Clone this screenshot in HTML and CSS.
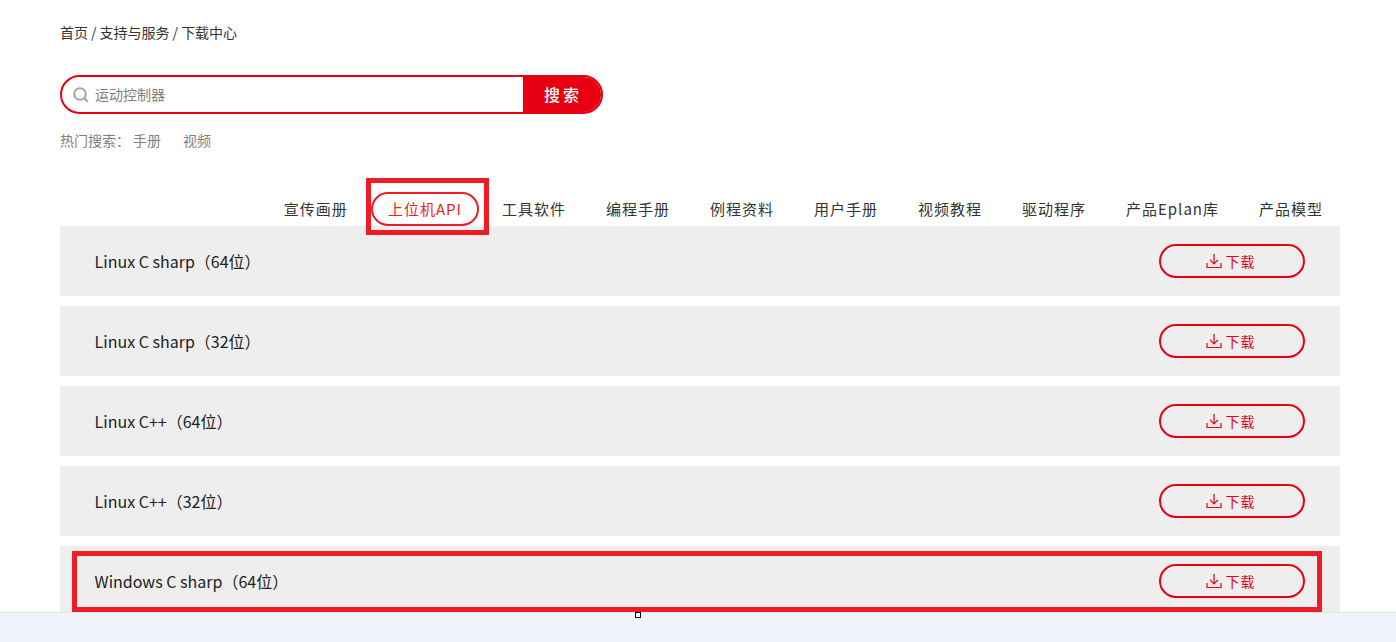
FILE: index.html
```html
<!DOCTYPE html>
<html lang="zh-CN">
<head>
  <meta charset="UTF-8" />
  <title>下载中心</title>
  <link rel="stylesheet" href="styles.css">
</head>
<body>

  <div class="page">
    <div class="crumbs">首页 / 支持与服务 / 下载中心</div>

    <form class="search">
      <svg class="search-icon" width="16" height="16" viewBox="0 0 16 16">
        <circle cx="7" cy="7" r="5.8" />
        <path d="M11.2 11.2 L14.8 14.8" />
      </svg>
      <input type="text" placeholder="运动控制器" />
      <button type="button">搜索</button>
    </form>

    <div class="hot">
      <span>热门搜索：</span>
      <a href="#">手册</a>
      <a href="#">视频</a>
    </div>

    <ul class="tabs">
      <li>宣传画册</li>
      <li class="active">上位机API</li>
      <li>工具软件</li>
      <li>编程手册</li>
      <li>例程资料</li>
      <li>用户手册</li>
      <li>视频教程</li>
      <li>驱动程序</li>
      <li>产品Eplan库</li>
      <li>产品模型</li>
    </ul>

    <div class="files">
      <div class="file">
        <span>Linux C sharp（64位）</span>
        <a class="down" href="#">
          <svg width="16" height="16" viewBox="0 0 16 16"><path d="M8 1 V10.5 M4 6.8 L8 10.8 L12 6.8 M1 10 V14.5 H15 V10" /></svg>
          <span>下载</span>
        </a>
      </div>
      <div class="file">
        <span>Linux C sharp（32位）</span>
        <a class="down" href="#">
          <svg width="16" height="16" viewBox="0 0 16 16"><path d="M8 1 V10.5 M4 6.8 L8 10.8 L12 6.8 M1 10 V14.5 H15 V10" /></svg>
          <span>下载</span>
        </a>
      </div>
      <div class="file">
        <span>Linux C++（64位）</span>
        <a class="down" href="#">
          <svg width="16" height="16" viewBox="0 0 16 16"><path d="M8 1 V10.5 M4 6.8 L8 10.8 L12 6.8 M1 10 V14.5 H15 V10" /></svg>
          <span>下载</span>
        </a>
      </div>
      <div class="file">
        <span>Linux C++（32位）</span>
        <a class="down" href="#">
          <svg width="16" height="16" viewBox="0 0 16 16"><path d="M8 1 V10.5 M4 6.8 L8 10.8 L12 6.8 M1 10 V14.5 H15 V10" /></svg>
          <span>下载</span>
        </a>
      </div>
      <div class="file">
        <span>Windows C sharp（64位）</span>
        <a class="down" href="#">
          <svg width="16" height="16" viewBox="0 0 16 16"><path d="M8 1 V10.5 M4 6.8 L8 10.8 L12 6.8 M1 10 V14.5 H15 V10" /></svg>
          <span>下载</span>
        </a>
      </div>
    </div>
  </div>

  <!-- red marks drawn over the screenshot -->
  <div class="mark mark-tab"></div>
  <div class="mark mark-row"></div>

  <div class="bottom-bar"><i class="handle"></i></div>

</body>
</html>
```

FILE: styles.css
```css
html, body {
  margin: 0;
  padding: 0;
  height: 642px;
  overflow: hidden;
  background-color: #fff;
  font-family: "Noto Sans CJK SC", "Noto Sans", sans-serif;
  color: #333;
}

a {
  text-decoration: none;
  color: inherit;
}

.page {
  padding: 0 56px 0 60px;
}

.crumbs {
  padding-top: 22px;
  font-size: 14px;
  line-height: 20px;
  letter-spacing: -0.03px;
  color: #333;
}

.search {
  display: flex;
  align-items: center;
  box-sizing: border-box;
  width: 543px;
  height: 39px;
  margin-top: 33px;
  padding-left: 11px;
  border: 2px solid #e60012;
  border-radius: 20px;
  overflow: hidden;
}

.search-icon {
  flex: none;
  fill: none;
  stroke: #a6a6a6;
  stroke-width: 2;
}

.search input {
  flex: 1;
  min-width: 0;
  margin-left: 6px;
  padding: 0 0 2px;
  border: none;
  outline: none;
  font-family: inherit;
  font-size: 14px;
  color: #808080;
}

.search input::placeholder {
  color: #808080;
  opacity: 1;
}

.search button {
  flex: none;
  align-self: stretch;
  width: 78px;
  padding: 0 0 2px 2px;
  border: none;
  background-color: #e60012;
  color: #fff;
  font-family: inherit;
  font-size: 16px;
  font-weight: 500;
  letter-spacing: 3px;
}

.hot {
  display: flex;
  margin-top: 15px;
  font-size: 14px;
  line-height: 22px;
  color: #808080;
}

.hot span {
  margin-right: 3px;
}

.hot a {
  margin-right: 22px;
  color: #808080;
}

.tabs {
  display: flex;
  justify-content: flex-end;
  gap: 6px;
  list-style: none;
  width: 1280px;
  margin: 41px 0 0;
  padding: 0;
}

.tabs li {
  box-sizing: border-box;
  height: 34px;
  padding: 0 15px;
  border: 2px solid transparent;
  border-radius: 17px;
  font-size: 15px;
  line-height: 30px;
  letter-spacing: 1px;
  color: #333;
  white-space: nowrap;
}

.tabs li.active {
  border-color: #ee1c25;
  color: #ee1c25;
}

.files {
  width: 1280px;
}

.file {
  display: flex;
  justify-content: space-between;
  align-items: center;
  height: 70px;
  margin-bottom: 10px;
  padding: 0 35px 0 34.6px;
  box-sizing: border-box;
  background-color: #eee;
  font-size: 16px;
  color: #222;
}

.down {
  display: flex;
  justify-content: center;
  align-items: center;
  gap: 4px;
  box-sizing: border-box;
  width: 146px;
  height: 34px;
  padding-right: 3px;
  border: 2px solid #e60012;
  border-radius: 17px;
  font-size: 14px;
  letter-spacing: 1px;
  color: #e60012;
}

.down span {
  padding-bottom: 1px;
}

.down svg {
  fill: none;
  stroke: #e60012;
  stroke-width: 1.2;
}

.mark {
  position: absolute;
  box-sizing: border-box;
  border: 5px solid #ee1c25;
}

.mark-tab {
  left: 366px;
  top: 178px;
  width: 123px;
  height: 57px;
}

.mark-row {
  left: 72px;
  top: 551px;
  width: 1250px;
  height: 61px;
}

.bottom-bar {
  position: fixed;
  left: 0;
  right: 0;
  bottom: 0;
  height: 30px;
  box-sizing: border-box;
  background-color: #eff2f9;
  border-top: 1px solid #e2e5ea;
}

.handle {
  position: absolute;
  left: 635px;
  top: -1px;
  box-sizing: border-box;
  width: 6px;
  height: 6px;
  background-color: #fff;
  border: 1px solid #000;
}
```
